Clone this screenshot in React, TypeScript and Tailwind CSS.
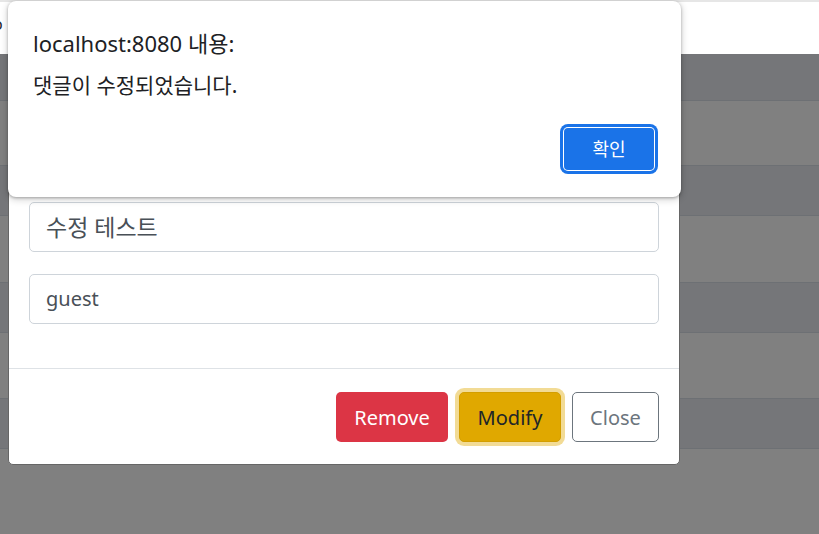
import React from "react";

const font = {
    fontFamily: '"Noto Sans", "Noto Sans CJK KR", sans-serif',
};

const rows: { h: string; dark: boolean }[] = [
    { h: "h-[46px]", dark: true },
    { h: "h-[65px]", dark: false },
    { h: "h-[50px]", dark: true },
    { h: "h-[67px]", dark: false },
    { h: "h-[50px]", dark: true },
    { h: "h-[66px]", dark: false },
    { h: "h-[50px]", dark: true },
];

const App: React.FC = () => {
    return (
        <div
            className="relative h-[534px] w-[819px] overflow-hidden bg-white"
            style={font}>
            {/* page behind the backdrop */}
            <div className="h-[54px] border-t-2 border-[#e6e6e6] bg-white">
                <span className="-ml-[7px] mt-[10px] block text-[16px] leading-[24px] text-[#212529]">
                    o
                </span>
            </div>
            <div className="flex h-[480px] flex-col bg-[#808080]">
                {rows.map((r, i) => (
                    <div
                        key={i}
                        className={
                            r.h +
                            (r.dark ? " bg-[#757679]" : " bg-[#808080]") +
                            (i > 0 ? " border-t border-[#6d7074]" : "")
                        }
                    />
                ))}
                <div className="flex-1 border-t border-[#6d7074] bg-[#808080]" />
            </div>

            {/* bootstrap modal */}
            <div className="absolute left-[8px] top-[100px] w-[672px] rounded-[5px] border border-[#666666] bg-white">
                <div className="h-[80px] border-b border-[#dee2e6] px-5 py-4 text-[20px] text-[#212529]">
                    댓글 수정
                </div>
                <div className="flex flex-col gap-[22px] px-5 pb-[44px] pt-[21px]">
                    <div className="flex h-[50px] items-center rounded-[5px] border border-[#ced4da] px-4 text-[23px] text-[#495057]">
                        수정 테스트
                    </div>
                    <div className="flex h-[50px] items-center rounded-[5px] border border-[#ced4da] px-4 text-[20px] text-[#495057]">
                        guest
                    </div>
                </div>
                <div className="flex justify-end gap-[11px] border-t border-[#dee2e6] px-5 pb-[22px] pt-[23px]">
                    <button className="flex h-[50px] w-[112px] items-center justify-center rounded-[5px] bg-[#dc3545] pt-[2px] text-[20px] text-white">
                        Remove
                    </button>
                    <button className="flex h-[50px] w-[102px] items-center justify-center rounded-[5px] border border-[#d39e00] bg-[#e0a800] pt-[2px] text-[20px] text-[#212529] shadow-[0_0_0_4px_rgba(226,176,20,0.45)]">
                        Modify
                    </button>
                    <button className="flex h-[50px] w-[87px] items-center justify-center rounded-[5px] border border-[#6c757d] bg-white pt-[2px] text-[20px] text-[#6c757d]">
                        Close
                    </button>
                </div>
            </div>

            {/* browser alert */}
            <div className="absolute left-[8px] top-[1px] flex h-[196px] w-[673px] flex-col rounded-[8px] bg-white shadow-[0_1px_3px_rgba(0,0,0,0.3),0_2px_6px_2px_rgba(0,0,0,0.12)]">
                <div className="pl-[25px] pt-[29px] text-[22px] leading-[26px] text-[#202124]">
                    localhost:8080 내용:
                </div>
                <div className="pl-[25px] pt-[15px] text-[21px] leading-[28px] text-[#202124]">
                    댓글이 수정되었습니다.
                </div>
                <div className="mt-auto flex justify-end pb-[27px] pr-[27px]">
                    <button className="flex h-[42px] w-[90px] items-center justify-center rounded-[4px] bg-[#1a73e8] text-[18px] text-white ring-[3px] ring-[#1a73e8] ring-offset-1">
                        확인
                    </button>
                </div>
            </div>
        </div>
    );
};

export default App;
